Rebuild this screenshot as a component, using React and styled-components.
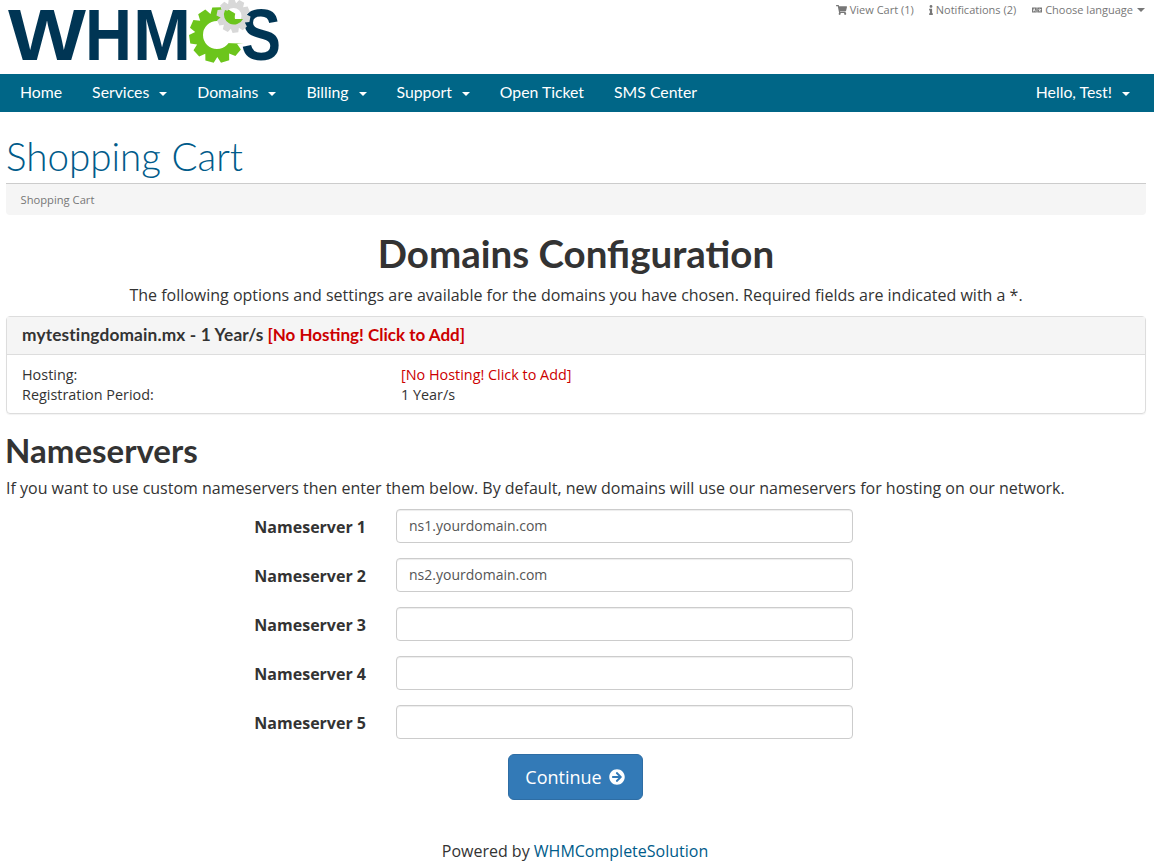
import React from "react";
import styled, { createGlobalStyle } from "styled-components";
import { FaShoppingCart, FaInfo, FaLanguage, FaArrowCircleRight } from "react-icons/fa";

const GlobalStyle = createGlobalStyle`
  body {
    margin: 0;
    background: #fff;
    color: #333;
    font-family: "Open Sans", sans-serif;
    font-size: 14px;
    line-height: 20px;
  }
`;

const Header = styled.header`
  height: 74px;
  display: flex;
  justify-content: space-between;
  padding: 0 9px 0 8px;
`;

const TopLinks = styled.div`
  display: flex;
  gap: 15px;
  font-size: 11px;
  color: #777;
`;

const TopLink = styled.a`
  display: flex;
  align-items: center;
  gap: 3px;
  height: 20px;
  margin-left: ${(p) => p.$shift || 0}px;
`;

const CartIcon = styled(FaShoppingCart)`
  width: 11px;
  height: 10px;
`;

const InfoIcon = styled(FaInfo)`
  width: 4px;
  height: 10px;
`;

const LanguageIcon = styled(FaLanguage)`
  width: 10px;
  height: 8px;
`;

const SmallCaret = styled.span`
  width: 0;
  height: 0;
  margin-left: 1px;
  border-top: 4px solid #777;
  border-left: 4px solid transparent;
  border-right: 4px solid transparent;
`;

const Nav = styled.nav`
  height: 38px;
  background: #006687;
  display: flex;
  justify-content: space-between;
  padding: 0 9px 0 5px;
  font-family: Lato, sans-serif;
  font-size: 15.8px;
  color: #fff;
`;

const NavGroup = styled.div`
  display: flex;
`;

const NavItem = styled.a`
  display: flex;
  align-items: center;
  gap: 10px;
  padding: 0 15px 2px;
`;

const NavCaret = styled.span`
  width: 0;
  height: 0;
  margin-top: 3px;
  border-top: 4px solid #fff;
  border-left: 4px solid transparent;
  border-right: 4px solid transparent;
`;

const Main = styled.main`
  padding: 0 8px 0 6px;
`;

const PageTitle = styled.h1`
  margin: 0;
  padding-top: 22px;
  height: 72px;
  box-sizing: border-box;
  font-family: Lato, sans-serif;
  font-size: 38.6px;
  line-height: 44px;
  font-weight: 300;
  color: #005b8a;
  border-bottom: 1px solid #ccc;
`;

const Breadcrumb = styled.div`
  height: 31px;
  padding: 6px 14.5px 0;
  box-sizing: border-box;
  background: #f5f5f5;
  border-radius: 0 0 4px 4px;
  font-size: 11.2px;
  color: #777;
`;

const Heading = styled.h2`
  margin: 18px 0 0;
  text-align: center;
  font-family: Lato, sans-serif;
  font-size: 38.5px;
  line-height: 40px;
  font-weight: 700;
`;

const Lead = styled.p`
  margin: 11px 0 10px;
  text-align: center;
  font-size: 16px;
  line-height: 22px;
`;

const Panel = styled.section`
  border: 1px solid #ddd;
  border-radius: 4px;
  box-shadow: 0 1px 1px rgba(0, 0, 0, 0.05);
`;

const PanelHead = styled.div`
  height: 37px;
  padding: 0 15px 0;
  display: flex;
  align-items: center;
  background: #f5f5f5;
  border-bottom: 1px solid #ddd;
  font-family: Lato, sans-serif;
  font-size: 17.3px;
  font-weight: 700;
`;

const PanelHeadText = styled.span`
  display: flex;
  gap: 4px;
  margin-bottom: 2px;
  letter-spacing: 0.15px;
`;

const Danger = styled.span`
  color: #c00;
`;

const HeadDanger = styled(Danger)`
  font-size: 17px;
  letter-spacing: 0;
`;

const PanelBody = styled.div`
  padding: 10px 15px 8px;
  display: grid;
  grid-template-columns: 379px 1fr;
  font-size: 14.4px;
`;

const SectionTitle = styled.h3`
  margin: 18px 0 0 -1px;
  font-family: Lato, sans-serif;
  font-size: 33px;
  line-height: 36px;
  font-weight: 700;
`;

const Note = styled.p`
  margin: 9px 0 10px;
  font-size: 16px;
  line-height: 22px;
`;

const Fields = styled.div`
  display: flex;
  flex-direction: column;
  gap: 15px;
`;

const FieldRow = styled.div`
  display: grid;
  grid-template-columns: 360px 457px;
  column-gap: 30px;
  align-items: center;
`;

const FieldLabel = styled.label`
  padding-top: 2px;
  text-align: right;
  font-size: 16px;
  font-weight: 700;
`;

const Input = styled.input`
  height: 34px;
  box-sizing: border-box;
  padding: 0 12px 2px;
  border: 1px solid #ccc;
  border-radius: 4px;
  box-shadow: inset 0 1px 1px rgba(0, 0, 0, 0.075);
  font-family: "Open Sans", sans-serif;
  font-size: 14px;
  color: #555;
`;

const Actions = styled.div`
  display: flex;
  justify-content: center;
  margin-top: 15px;
  padding-right: 2px;
`;

const PrimaryButton = styled.button`
  width: 135px;
  height: 46px;
  display: flex;
  align-items: center;
  justify-content: center;
  gap: 7px;
  background: #337ab7;
  border: 1px solid #2e6da4;
  border-radius: 6px;
  color: #fff;
  font-family: "Open Sans", sans-serif;
  font-size: 18px;
`;

const Footer = styled.footer`
  margin-top: 40px;
  text-align: center;
  font-size: 16px;
  line-height: 22px;
  padding-right: 2px;
`;

const FooterLink = styled.a`
  color: #005b8a;
`;

// teeth: outer outline of a cog, as a closed path
const cogPath = (cx, cy, outer, root, teeth, turn = 0) => {
  const step = (Math.PI * 2) / teeth;
  const pts = [];
  for (let i = 0; i < teeth; i++) {
    const a = turn + i * step;
    [[-0.5, root], [-0.27, outer], [0.27, outer], [0.5, root]].forEach(([k, r]) => {
      pts.push(`${(cx + r * Math.cos(a + k * step)).toFixed(1)} ${(cy + r * Math.sin(a + k * step)).toFixed(1)}`);
    });
  }
  return `M${pts.join("L")}Z`;
};

const circlePath = (cx, cy, r) =>
  `M${cx - r} ${cy}a${r} ${r} 0 1 0 ${r * 2} 0a${r} ${r} 0 1 0 ${-r * 2} 0Z`;

const Logo = () => (
  <svg width="272" height="64" viewBox="8 0 272 64" aria-label="WHMCS">
    <g fill="#003554" fontFamily="Liberation Sans, sans-serif" fontSize="73" fontWeight="700">
      <text x="8" y="60" textLength="78" lengthAdjust="spacingAndGlyphs">W</text>
      <text x="85" y="60" textLength="47" lengthAdjust="spacingAndGlyphs">H</text>
      <text x="133" y="60" textLength="58" lengthAdjust="spacingAndGlyphs">M</text>
    </g>
    <path fillRule="evenodd" fill="#6cc51c" d={cogPath(217, 35, 28, 22, 11, 0.13) + circlePath(217, 35, 14)} />
    <path fill="#fff" d="M217 35L252 12L252 44L226 43Z" />
    <text x="241" y="60" textLength="40" lengthAdjust="spacingAndGlyphs" fill="#003554" fontFamily="Liberation Sans, sans-serif" fontSize="73" fontWeight="700">S</text>
    <path fillRule="evenodd" fill="#d8d8d8" d={cogPath(233.5, 16, 17, 13, 10, 0.2) + circlePath(233.5, 16, 8)} />
    <path fill="#6cc51c" d="M225 10a10 10 0 0 0 18 9l-8 0-1-6Z" />
  </svg>
);

const navLeft = [
  ["Home", false],
  ["Services", true],
  ["Domains", true],
  ["Billing", true],
  ["Support", true],
  ["Open Ticket", false],
  ["SMS Center", false],
];

const nameservers = ["ns1.yourdomain.com", "ns2.yourdomain.com", "", "", ""];

const App = () => (
  <>
    <GlobalStyle />
    <Header>
      <Logo />
      <TopLinks>
        <TopLink><CartIcon /> View Cart (1)</TopLink>
        <TopLink><InfoIcon /> Notifications (2)</TopLink>
        <TopLink $shift={1}><LanguageIcon /> Choose language <SmallCaret /></TopLink>
      </TopLinks>
    </Header>
    <Nav>
      <NavGroup>
        {navLeft.map(([label, caret]) => (
          <NavItem key={label}>
            {label}
            {caret && <NavCaret />}
          </NavItem>
        ))}
      </NavGroup>
      <NavGroup>
        <NavItem>Hello, Test! <NavCaret /></NavItem>
      </NavGroup>
    </Nav>
    <Main>
      <PageTitle>Shopping Cart</PageTitle>
      <Breadcrumb>Shopping Cart</Breadcrumb>
      <Heading>Domains Configuration</Heading>
      <Lead>
        The following options and settings are available for the domains you have chosen. Required fields are indicated with a *.
      </Lead>
      <Panel>
        <PanelHead>
          <PanelHeadText>
            mytestingdomain.mx - 1 Year/s <HeadDanger>[No Hosting! Click to Add]</HeadDanger>
          </PanelHeadText>
        </PanelHead>
        <PanelBody>
          <span>Hosting:</span>
          <Danger>[No Hosting! Click to Add]</Danger>
          <span>Registration Period:</span>
          <span>1 Year/s</span>
        </PanelBody>
      </Panel>
      <SectionTitle>Nameservers</SectionTitle>
      <Note>
        If you want to use custom nameservers then enter them below. By default, new domains will use our nameservers for hosting on our network.
      </Note>
      <Fields>
        {nameservers.map((value, i) => (
          <FieldRow key={i}>
            <FieldLabel>Nameserver {i + 1}</FieldLabel>
            <Input defaultValue={value} />
          </FieldRow>
        ))}
      </Fields>
      <Actions>
        <PrimaryButton>Continue <FaArrowCircleRight size={16} /></PrimaryButton>
      </Actions>
      <Footer>
        Powered by <FooterLink>WHMCompleteSolution</FooterLink>
      </Footer>
    </Main>
  </>
);

export default App;
